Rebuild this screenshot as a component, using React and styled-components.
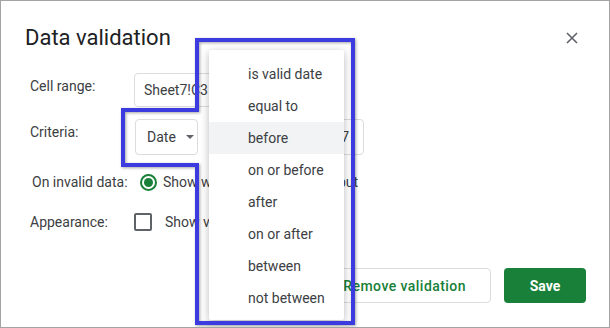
import React from 'react';
import styled, { createGlobalStyle } from 'styled-components';

const criteriaOptions = ['is valid date', 'equal to', 'before', 'on or before', 'after', 'on or after', 'between', 'not between'];

const GlobalStyle = createGlobalStyle`
  html, body { margin: 0; padding: 0; background: #fff; }
  body { font-family: Roboto, "Liberation Sans", Arial, sans-serif; }
  * { box-sizing: border-box; }
`;

export default function App() {
    return (
        <>
            <GlobalStyle />
            <Dialog>
                <Header>
                    <Title>Data validation</Title>
                    <CloseButton aria-label="close">
                        <svg width="14" height="14" viewBox="0 0 14 14">
                            <path d="M2 2 L12 12 M12 2 L2 12" stroke="#5f6368" strokeWidth="1.6" fill="none" />
                        </svg>
                    </CloseButton>
                </Header>

                <Form>
                    <FieldRow $mt={22} $align="flex-start">
                        <Label $pt={3}>Cell range:</Label>
                        <TextBox $width={196} $h={34}>Sheet7!C3</TextBox>
                    </FieldRow>
                    <FieldRow $mt={12} $align="flex-start">
                        <Label $pt={3}>Criteria:</Label>
                        <Controls>
                            <Select>
                                Date
                                <Caret />
                            </Select>
                            <TextBox $width={154} $right>1/1/2017</TextBox>
                        </Controls>
                    </FieldRow>
                    <FieldRow $mt={15} $align="center" $h={24}>
                        <Label $indent={2}>On invalid data:</Label>
                        <Controls $gap={0}>
                            <Radio $checked $ml={6} />
                            <OptionText>Show warning</OptionText>
                            <Radio $ml={11} />
                            <OptionText>Reject input</OptionText>
                        </Controls>
                    </FieldRow>
                    <FieldRow $mt={16} $align="center" $h={24}>
                        <Label>Appearance:</Label>
                        <Controls $gap={0}>
                            <Checkbox />
                            <OptionText $ml={13}>Show validation help text:</OptionText>
                        </Controls>
                    </FieldRow>
                </Form>

                <Footer>
                    <OutlineButton>Remove validation</OutlineButton>
                    <PrimaryButton>Save</PrimaryButton>
                </Footer>

                <Menu>
                    {criteriaOptions.map((opt, i) => (
                        <MenuItem key={opt} $active={i === 2}>{opt}</MenuItem>
                    ))}
                </Menu>

                <Annotation width="610" height="328" viewBox="0 0 610 328">
                    <path
                        d="M197 40 H353 V323 H197 V165 H123 V110 H197 Z"
                        fill="none"
                        stroke="#3b3be0"
                        strokeWidth="4"
                        strokeLinejoin="miter"
                    />
                </Annotation>
            </Dialog>
        </>
    );
}

const Dialog = styled.div`
position: relative;
width: 610px;
height: 328px;
border: 1px solid #a3a3a3;
background: #fff;
padding: 0 23px 0 24px;
overflow: hidden;
color: #3c4043;
`
const Header = styled.div`
display: flex;
align-items: center;
justify-content: space-between;
height: 50px;
padding-top: 24px;
`
const Title = styled.h1`
margin: 0;
font-family: Roboto, "Liberation Sans", sans-serif;
font-weight: 400;
font-size: 22px;
line-height: 28px;
color: #202124;
`
const CloseButton = styled.div`
display: flex;
align-items: center;
justify-content: center;
width: 24px;
height: 24px;
margin-right: 2px;
margin-top: -1px;
`
const Form = styled.div`
display: flex;
flex-direction: column;
`
const FieldRow = styled.div`
display: flex;
align-items: ${p => p.$align};
margin-top: ${p => p.$mt}px;
height: ${p => (p.$h ? `${p.$h}px` : 'auto')};
`
const Label = styled.div`
width: 109px;
flex-shrink: 0;
padding-left: ${p => 5 + (p.$indent || 0)}px;
padding-top: ${p => p.$pt || 0}px;
font-size: 14px;
line-height: 20px;
color: #3c4043;
`
const Controls = styled.div`
display: flex;
align-items: center;
gap: ${p => (p.$gap !== undefined ? p.$gap : 12)}px;
`
const TextBox = styled.div`
width: ${p => p.$width}px;
height: ${p => p.$h || 36}px;
border: 1px solid #dadce0;
border-radius: 4px;
padding: 0 ${p => (p.$right ? '14px' : '9px')};
display: flex;
align-items: center;
justify-content: ${p => (p.$right ? 'flex-end' : 'flex-start')};
font-size: 14px;
color: #3c4043;
`
const Select = styled.div`
width: 63px;
height: 36px;
margin-left: 1px;
border: 1px solid #dadce0;
border-radius: 4px;
padding: 0 0 0 11px;
display: flex;
align-items: center;
font-size: 14px;
color: #3c4043;
`
const Caret = styled.span`
width: 0;
height: 0;
margin-left: 10px;
border-left: 4px solid transparent;
border-right: 4px solid transparent;
border-top: 4px solid #5f6368;
`
const Radio = styled.span`
width: 17px;
height: 17px;
margin-left: ${p => p.$ml || 0}px;
border-radius: 50%;
border: 2px solid ${p => (p.$checked ? '#188038' : '#5f6368')};
display: flex;
align-items: center;
justify-content: center;
flex-shrink: 0;
&::after {
    content: '';
    width: 9px;
    height: 9px;
    border-radius: 50%;
    background: ${p => (p.$checked ? '#188038' : 'transparent')};
}
`
const Checkbox = styled.span`
width: 18px;
height: 18px;
border: 2px solid #5f6368;
border-radius: 2px;
flex-shrink: 0;
`
const OptionText = styled.span`
margin-left: ${p => p.$ml || 6}px;
font-size: 14px;
line-height: 20px;
color: #3c4043;
white-space: nowrap;
`
const Footer = styled.div`
display: flex;
justify-content: flex-end;
gap: 13px;
margin-top: 34px;
`
const OutlineButton = styled.div`
height: 35px;
padding: 0 24px;
border: 1px solid #dadce0;
border-radius: 4px;
display: flex;
align-items: center;
font-size: 14px;
font-weight: 500;
letter-spacing: 0.45px;
color: #188038;
`
const PrimaryButton = styled.div`
height: 35px;
width: 82px;
border-radius: 4px;
background: #188038;
display: flex;
align-items: center;
justify-content: center;
font-size: 14px;
font-weight: 700;
color: #fff;
`
const Menu = styled.div`
position: absolute;
left: 208px;
top: 49px;
width: 135px;
padding: 8px 0 6px;
background: #fff;
box-shadow: 0 2px 8px rgba(0, 0, 0, 0.28);
border-radius: 2px;
`
const MenuItem = styled.div`
height: 32px;
padding-left: 39px;
display: flex;
align-items: center;
font-size: 14px;
color: #3c4043;
background: ${p => (p.$active ? '#f1f3f4' : 'transparent')};
`
const Annotation = styled.svg`
position: absolute;
left: -1px;
top: -1px;
pointer-events: none;
filter: drop-shadow(1px 1px 1.5px rgba(0, 0, 0, 0.35));
`
